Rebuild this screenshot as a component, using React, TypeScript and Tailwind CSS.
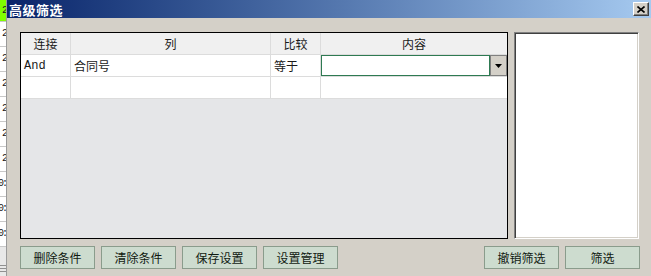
import React from "react";

function LeftStrip() {
  const rows = [
    { t: "2", green: true, h: "h-[22px]" },
    { t: "2", h: "h-[25px]" },
    { t: "2", h: "h-[25px]" },
    { t: "2", h: "h-[25px]" },
    { t: "2", h: "h-[25px]" },
    { t: "2", h: "h-[25px]" },
    { t: "2", h: "h-[25px]" },
    { t: "0:", h: "h-[25px]" },
    { t: "0:", h: "h-[25px]" },
    { t: "0:", h: "h-[25px]" },
  ];
  return (
    <div className="w-[7px] h-[276px] shrink-0 flex flex-col bg-white border-r border-[#9a9a9a] overflow-hidden font-['Liberation_Mono',monospace] text-[10px] leading-none text-[#202020]">
      {rows.map((r, i) => (
        <div
          key={i}
          className={`${r.h} shrink-0 flex items-center justify-end border-b border-[#c8c8c8] overflow-hidden ${r.green ? "bg-[#80ff00]" : "bg-white"}`}
        >
          <span className="whitespace-nowrap tracking-[-2px]">{r.t}</span>
        </div>
      ))}
      <div className="h-[15px] shrink-0 bg-[#e8e8e8]" />
      <div className="flex-1 flex flex-col gap-[2px] pt-[3px] bg-[#e8e8e8]">
        <div className="h-px bg-[#909090]" />
        <div className="h-px bg-[#909090]" />
        <div className="h-px bg-[#909090]" />
      </div>
    </div>
  );
}

function Btn({ label }: { label: string }) {
  return (
    <div className="w-[75px] h-[23px] shrink-0 flex items-center justify-center bg-[#cddccf] border border-[#8a9c8c] text-[12px] text-[#111a11]">
      {label}
    </div>
  );
}

export default function App() {
  return (
    <div className="flex w-[651px] h-[276px] overflow-hidden bg-[#d4d0c8] font-['Noto_Sans_CJK_SC','Liberation_Sans',sans-serif] text-[12px] text-[#1a1a1a]">
      <LeftStrip />
      <div className="flex flex-col flex-1 min-w-0">
        {/* title bar */}
        <div className="h-[18px] shrink-0 flex items-center justify-between pl-[2px] pr-[2px] bg-gradient-to-r from-[#0a246a] to-[#a6caf0]">
          <span className="text-white font-bold text-[13px] leading-none tracking-[0.5px]">高级筛选</span>
          <div className="w-[16px] h-[14px] bg-[#d4d0c8] border-t border-l border-t-white border-l-white border-b border-r border-b-[#404040] border-r-[#404040] shadow-[inset_-1px_-1px_0_#808080] flex items-center justify-center">
            <svg width="8" height="7" viewBox="0 0 8 7">
              <path d="M0.5 0.5 L7.5 6.5 M7.5 0.5 L0.5 6.5" stroke="#000" strokeWidth="1.6" />
            </svg>
          </div>
        </div>

        {/* body */}
        <div className="flex flex-col pl-[13px] pr-[12px] pt-[14px]">
          <div className="flex gap-[6px] h-[207px]">
            {/* grid */}
            <div className="w-[488px] h-full border border-black bg-[#e5e6e8] flex flex-col">
              <div className="h-[22px] flex bg-[#f0f0f0] border-b border-[#dcdcdc]">
                <div className="w-[50px] border-r border-[#dcdcdc] flex items-center justify-center">连接</div>
                <div className="w-[200px] border-r border-[#dcdcdc] flex items-center justify-center">列</div>
                <div className="w-[50px] border-r border-[#dcdcdc] flex items-center justify-center">比较</div>
                <div className="flex-1 flex items-center justify-center">内容</div>
              </div>
              <div className="h-[22px] flex bg-white border-b border-[#dcdcdc]">
                <div className="w-[50px] border-r border-[#dcdcdc] flex items-center pl-[3px] font-['Liberation_Mono',monospace] text-[12px]">And</div>
                <div className="w-[200px] border-r border-[#dcdcdc] flex items-center pl-[3px]">合同号</div>
                <div className="w-[50px] border-r border-[#dcdcdc] flex items-center pl-[3px]">等于</div>
                <div className="flex-1 flex">
                  <div className="flex-1 bg-white border border-[#2e7a52]" />
                  <div className="w-[17px] bg-[#d4d0c8] border border-[#808080] flex items-center justify-center">
                    <svg width="7" height="4" viewBox="0 0 7 4">
                      <path d="M0 0 H7 L3.5 4 Z" fill="#000" />
                    </svg>
                  </div>
                </div>
              </div>
              <div className="h-[22px] flex bg-white border-b border-[#dcdcdc]">
                <div className="w-[50px] border-r border-[#dcdcdc]" />
                <div className="w-[200px] border-r border-[#dcdcdc]" />
                <div className="w-[50px] border-r border-[#dcdcdc]" />
                <div className="flex-1" />
              </div>
            </div>
            {/* right panel */}
            <div className="w-[125px] h-full bg-white border border-t-[#808080] border-l-[#808080] border-b-white border-r-white shadow-[inset_1px_1px_0_#404040,inset_-1px_-1px_0_#d4d0c8]" />
          </div>

          <div className="flex justify-between mt-[7px] mr-[-1px]">
            <div className="flex gap-[6px]">
              <Btn label="删除条件" />
              <Btn label="清除条件" />
              <Btn label="保存设置" />
              <Btn label="设置管理" />
            </div>
            <div className="flex gap-[6px]">
              <Btn label="撤销筛选" />
              <Btn label="筛选" />
            </div>
          </div>
        </div>
      </div>
    </div>
  );
}
